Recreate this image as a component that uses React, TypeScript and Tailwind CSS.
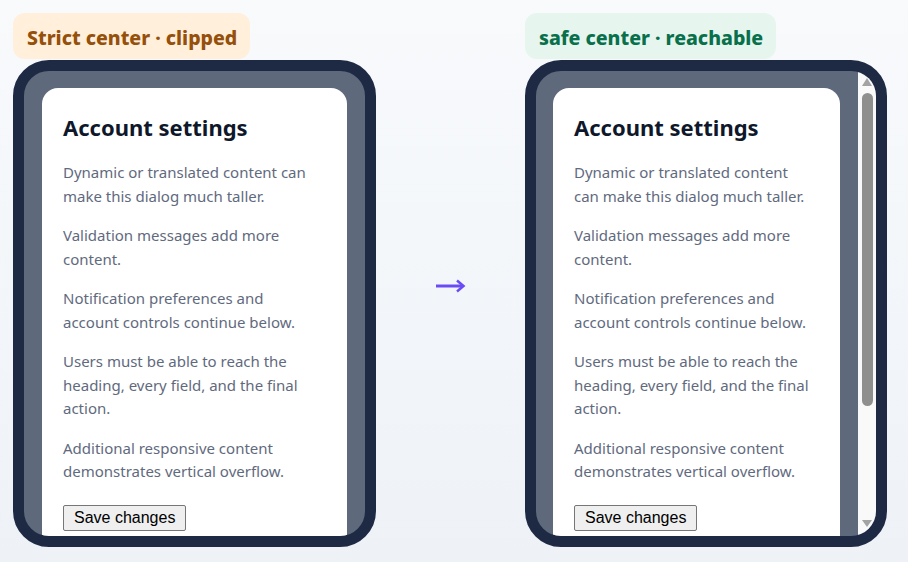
import React from "react";

const paras = [
  "Dynamic or translated content can make this dialog much taller.",
  "Validation messages add more content.",
  "Notification preferences and account controls continue below.",
  "Users must be able to reach the heading, every field, and the final action.",
  "Additional responsive content demonstrates vertical overflow.",
];

function Dialog() {
  return (
    <div className="bg-white rounded-2xl pt-[26px] pl-[21px] pr-[28px] pb-[24px]">
      <h2 className="text-[22px] leading-[26px] font-bold text-[#0f172a] mb-[21px]">Account settings</h2>
      {paras.map((p) => (
        <p key={p} className="text-[15px] leading-[23.5px] text-[#5f6a7e] mb-4">
          {p}
        </p>
      ))}
      <button className="mt-[5px] h-[26px] px-[10px] bg-[#efefef] border border-[#767676] rounded-[2px] text-[16px] leading-[18px] text-black [font-family:'Liberation_Sans',Arial,sans-serif]">
        Save changes
      </button>
    </div>
  );
}

function Scrollbar() {
  return (
    <div className="w-[18px] shrink-0 bg-[#f9f9f9] flex flex-col items-center">
      <svg width="10" height="8" viewBox="0 0 10 8" className="mt-[7px]">
        <polygon points="5,0 10,8 0,8" fill="#a3a3a3" />
      </svg>
      <div className="mt-[7px] w-[11px] h-[313px] rounded-full bg-[#8f8f8f]" />
      <div className="flex-1" />
      <svg width="10" height="7" viewBox="0 0 10 7" className="mb-[9px]">
        <polygon points="0,0 10,0 5,7" fill="#a3a3a3" />
      </svg>
    </div>
  );
}

export default function App() {
  return (
    <div className="min-h-screen bg-gradient-to-b from-[#f8fafc] to-[#eef2f7] [font-family:'Noto_Sans',sans-serif]">
      <div className="grid grid-cols-[363px_149px_362px] pt-[13px] pl-[13px] items-center">
        <div className="flex flex-col items-start">
          <div className="h-[46px] pl-[14px] pr-[13px] pt-[3px] flex items-center rounded-xl bg-[#ffefdb] text-[#95500b] text-[19.5px] font-extrabold">
            Strict center · clipped
          </div>
          <div className="mt-px w-[363px] h-[487px] border-[11px] border-[#1e2a44] rounded-[36px] bg-[#5e6a7c] overflow-hidden pt-[17px] px-[18px]">
            <Dialog />
          </div>
        </div>
        <div className="flex justify-center pt-[12px]">
          <svg width="30" height="14" viewBox="0 0 30 14" aria-label="→">
            <line x1="0" y1="7" x2="27" y2="7" stroke="#6a4cf5" strokeWidth="3" />
            <polyline points="21,1.5 27.5,7 21,12.5" fill="none" stroke="#6a4cf5" strokeWidth="2.5" />
          </svg>
        </div>
        <div className="flex flex-col items-start">
          <div className="h-[46px] pl-[14px] pr-[13px] pt-[3px] flex items-center rounded-xl bg-[#e6f5ee] text-[#08704b] text-[19.5px] font-extrabold">
            safe center · reachable
          </div>
          <div className="mt-px w-[362px] h-[487px] border-[11px] border-[#1e2a44] rounded-[36px] bg-[#5e6a7c] overflow-hidden flex">
            <div className="flex-1 min-w-0 overflow-hidden pt-[17px] pl-[17px] pr-[18px]">
              <Dialog />
            </div>
            <Scrollbar />
          </div>
        </div>
      </div>
    </div>
  );
}
